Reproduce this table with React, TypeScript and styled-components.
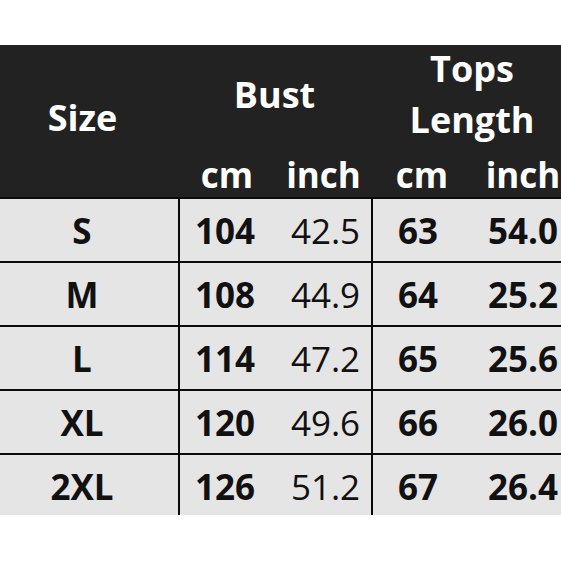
import styled, { createGlobalStyle } from 'styled-components';

type SizeRow = {
  size: string;
  bustCm: string;
  bustInch: string;
  topsCm: string;
  topsInch: string;
};

const rows: SizeRow[] = [
  { size: 'S', bustCm: '104', bustInch: '42.5', topsCm: '63', topsInch: '54.0' },
  { size: 'M', bustCm: '108', bustInch: '44.9', topsCm: '64', topsInch: '25.2' },
  { size: 'L', bustCm: '114', bustInch: '47.2', topsCm: '65', topsInch: '25.6' },
  { size: 'XL', bustCm: '120', bustInch: '49.6', topsCm: '66', topsInch: '26.0' },
  { size: '2XL', bustCm: '126', bustInch: '51.2', topsCm: '67', topsInch: '26.4' },
];

export default function App() {
  return (
    <>
      <GlobalStyle />
      <Page>
        <Chart>
          <Header>
            <HeadCell $col="1" $row="1 / 3" $padRight={13} $lift={8}>
              Size
            </HeadCell>
            <HeadCell $col="2 / 4" $row="1" $lift={6}>
              Bust
            </HeadCell>
            <HeadCell $col="4 / 6" $row="1" $lift={8} $tight>
              Tops
              <br />
              Length
            </HeadCell>
            <UnitCell $col="2" $row="2">cm</UnitCell>
            <UnitCell $col="3" $row="2">inch</UnitCell>
            <UnitCell $col="4" $row="2">cm</UnitCell>
            <UnitCell $col="5" $row="2">inch</UnitCell>
          </Header>
          {rows.map((r) => (
            <BodyRow key={r.size}>
              <Cell $padRight={14}>{r.size}</Cell>
              <Cell $divider $padRight={6}>
                {r.bustCm}
              </Cell>
              <Cell $light $padLeft={4}>
                {r.bustInch}
              </Cell>
              <Cell $divider $padRight={10}>
                {r.topsCm}
              </Cell>
              <Cell>{r.topsInch}</Cell>
            </BodyRow>
          ))}
        </Chart>
      </Page>
    </>
  );
}

const GlobalStyle = createGlobalStyle`
  html, body {
    margin: 0;
    padding: 0;
    background: #ffffff;
  }
  body {
    font-family: "Open Sans", "Liberation Sans", sans-serif;
  }
`;

const columns = '178px 98px 95px 102px 100px';

const Page = styled.div`
  width: 561px;
  height: 561px;
  padding-top: 45px;
  box-sizing: border-box;
  overflow: hidden;
  background: #ffffff;
`;

const Chart = styled.div`
  width: 573px;
  height: 470px;
  overflow: hidden;
`;

const Header = styled.div`
  display: grid;
  grid-template-columns: ${columns};
  grid-template-rows: 105px 47px;
  background: #222222;
  border-bottom: 2px solid #0a0a0a;
  color: #ffffff;
`;

const HeadCell = styled.div<{ $col: string; $row: string; $padRight?: number; $lift?: number; $tight?: boolean }>`
  grid-column: ${(p) => p.$col};
  grid-row: ${(p) => p.$row};
  display: flex;
  align-items: center;
  justify-content: center;
  text-align: center;
  padding-right: ${(p) => p.$padRight ?? 0}px;
  padding-bottom: ${(p) => p.$lift ?? 0}px;
  font-size: 36px;
  font-weight: 700;
  line-height: ${(p) => (p.$tight ? '51px' : 'normal')};
`;

const UnitCell = styled.div<{ $col: string; $row: string }>`
  grid-column: ${(p) => p.$col};
  grid-row: ${(p) => p.$row};
  display: flex;
  align-items: center;
  justify-content: center;
  padding-top: 2px;
  font-size: 35px;
  font-weight: 700;
`;

const BodyRow = styled.div`
  display: grid;
  grid-template-columns: ${columns};
  height: 64px;
  box-sizing: border-box;
  background: #e6e5e6;
  border-bottom: 2px solid #0a0a0a;
`;

const Cell = styled.div<{ $divider?: boolean; $light?: boolean; $padLeft?: number; $padRight?: number }>`
  display: flex;
  align-items: center;
  justify-content: center;
  box-sizing: border-box;
  border-left: ${(p) => (p.$divider ? '2px solid #0a0a0a' : 'none')};
  padding-left: ${(p) => p.$padLeft ?? 0}px;
  padding-right: ${(p) => p.$padRight ?? 0}px;
  color: #111111;
  font-size: 35px;
  font-weight: ${(p) => (p.$light ? 400 : 700)};
`;
